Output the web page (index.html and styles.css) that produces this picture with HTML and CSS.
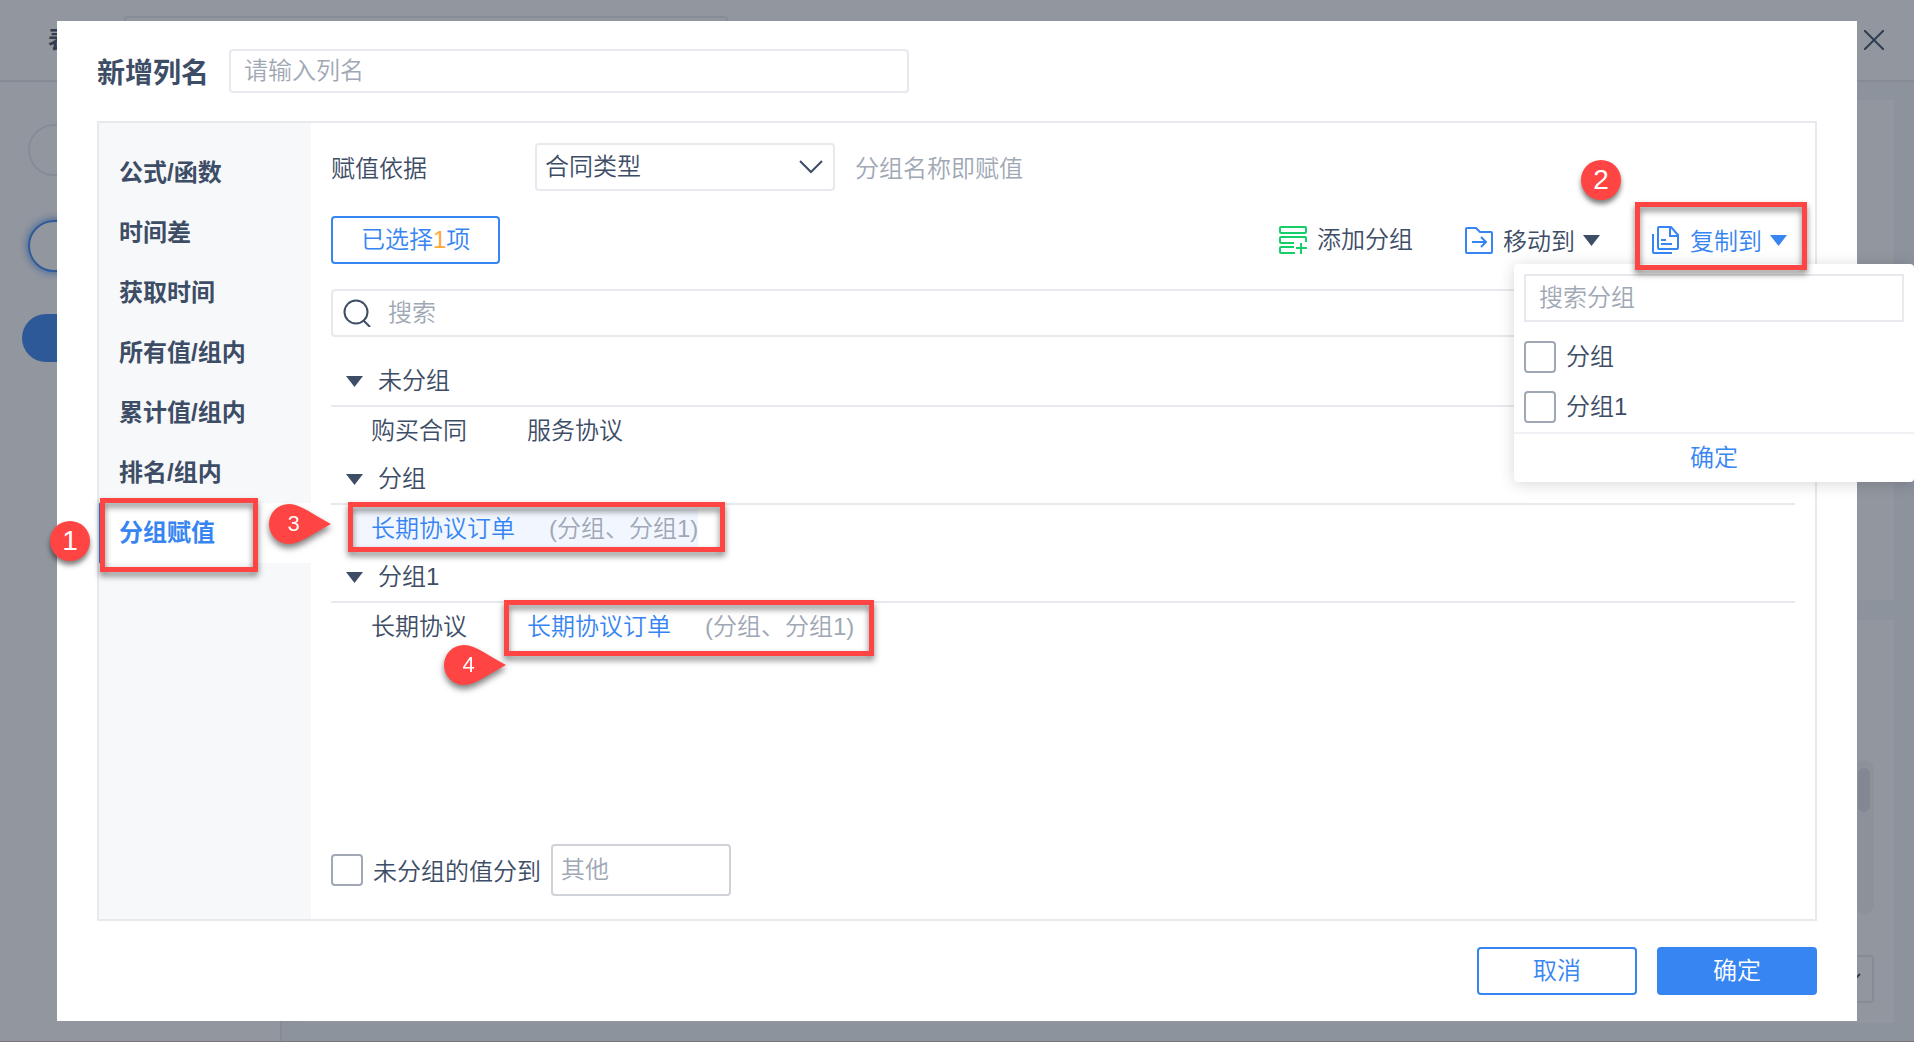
FILE: index.html
```
<!DOCTYPE html>
<html lang="zh-CN">
<head>
<meta charset="utf-8">
<meta name="viewport" content="width=device-width, initial-scale=1">
<title>新增列名</title>
<link rel="stylesheet" href="styles.css">
</head>
<body>
<div class="app" aria-hidden="true">
  <header class="app-header">
    <strong class="app-title">表</strong>
    <span class="app-name"></span>
    <svg class="app-close" viewBox="0 0 20 20" width="20" height="20"><path d="M0 0L20 20M20 0L0 20"/></svg>
  </header>
  <div class="app-main">
    <aside class="app-side">
      <span class="pill"></span>
      <span class="pill pill-focus"></span>
      <span class="pill pill-solid"></span>
    </aside>
    <div class="app-cards">
      <section class="app-card app-card-top"></section>
      <section class="app-card app-card-bottom">
        <div class="app-scroll"><span class="app-thumb"></span></div>
        <div class="app-select"><svg viewBox="0 0 22 12" width="22" height="12"><path d="M1 1L11 11L21 1"/></svg></div>
      </section>
    </div>
  </div>
  <div class="backdrop"></div>
</div>

<main class="modal" role="dialog" aria-labelledby="modal-title">
  <header class="modal-header">
    <h1 class="modal-title" id="modal-title"><label for="column-name">新增列名</label></h1>
    <input class="field name-field" id="column-name" type="text" placeholder="请输入列名">
  </header>

  <div class="panel">
    <nav class="tabs">
      <a class="tab" href="#formula">公式/函数</a>
      <a class="tab" href="#diff">时间差</a>
      <a class="tab" href="#time">获取时间</a>
      <a class="tab" href="#all">所有值/组内</a>
      <a class="tab" href="#total">累计值/组内</a>
      <a class="tab" href="#rank">排名/组内</a>
      <a class="tab tab-active" href="#group">分组赋值
        <span class="frame frame-tab"></span>
        <span class="badge badge-tab">1</span>
      </a>
    </nav>

    <section class="content">
      <div class="row basis-row">
        <label class="basis-label" for="basis">赋值依据</label>
        <div class="select-box">
          <select class="field select" id="basis"><option>合同类型</option></select>
          <svg class="chevron" viewBox="0 0 24 14" width="24" height="14"><path d="M1 1L12 12L23 1"/></svg>
        </div>
        <span class="muted basis-hint">分组名称即赋值</span>
      </div>

      <div class="row toolbar">
        <button class="btn btn-count" type="button">已选择<span class="count">1</span>项</button>
        <div class="actions">
          <button class="action" type="button">
            <svg class="icon icon-green" viewBox="0 0 28 28" width="28" height="28"><rect x="1" y="1" width="26" height="6" rx="1"/><path d="M27 16V12a1 1 0 0 0-1-1H2a1 1 0 0 0-1 1v4a1 1 0 0 0 1 1h13M15 21H2a1 1 0 0 0-1 1v4a1 1 0 0 0 1 1h14M17 22h11M22 17v11"/></svg>
            添加分组
          </button>
          <button class="action action-move" type="button">
            <svg class="icon" viewBox="0 0 28 28" width="28" height="28"><path d="M1 26V3a1 1 0 0 1 1-1h9l4 4h11a1 1 0 0 1 1 1v19a1 1 0 0 1-1 1H2a1 1 0 0 1-1-1zM7 16h14M16 11l5 5-5 5"/></svg>
            <span class="action-text">移动到</span>
            <svg class="caret" viewBox="0 0 17 11" width="17" height="11"><path d="M0 0H17L8.5 11z"/></svg>
          </button>
          <div class="copy">
            <button class="action action-copy" type="button" aria-expanded="true">
              <svg class="icon" viewBox="0 0 28 28" width="28" height="28"><path d="M1 8v18a1 1 0 0 0 1 1h18M6 22V2a1 1 0 0 1 1-1h12l7 8v13a1 1 0 0 1-1 1H7a1 1 0 0 1-1-1zM18 1v9h8M9 14h5M9 18h11"/></svg>
              <span class="action-text">复制到</span>
              <svg class="caret" viewBox="0 0 17 11" width="17" height="11"><path d="M0 0H17L8.5 11z"/></svg>
            </button>
            <div class="menu">
              <div class="menu-body">
                <input class="field menu-search" type="search" placeholder="搜索分组" aria-label="搜索分组">
                <label class="option"><input class="check" type="checkbox">分组</label>
                <label class="option"><input class="check" type="checkbox">分组1</label>
              </div>
              <button class="menu-ok" type="button">确定</button>
            </div>
            <span class="frame frame-copy"></span>
            <span class="badge badge-copy">2</span>
          </div>
        </div>
      </div>

      <div class="search">
        <svg class="search-icon" viewBox="0 0 28 28" width="28" height="28"><circle cx="13" cy="13" r="11.5"/><path d="M20 21l7 7"/></svg>
        <input class="field search-field" type="search" placeholder="搜索" aria-label="搜索">
      </div>

      <div class="groups">
        <h2 class="group-name"><svg class="caret" viewBox="0 0 17 11" width="17" height="11"><path d="M0 0H17L8.5 11z"/></svg>未分组</h2>
        <ul class="values">
          <li class="value">购买合同</li>
          <li class="value">服务协议</li>
        </ul>
        <h2 class="group-name"><svg class="caret" viewBox="0 0 17 11" width="17" height="11"><path d="M0 0H17L8.5 11z"/></svg>分组</h2>
        <ul class="values">
          <li class="value value-selected value-hover">长期协议订单<span class="muted">(分组、分组1)</span>
            <span class="frame frame-first"></span>
            <span class="pin pin-first"><svg viewBox="0 0 62 40" width="62" height="40"><path d="M20 0C32 0 46 12 62 20C46 28 32 40 20 40A20 20 0 0 1 20 0z"/></svg><b>3</b></span>
          </li>
        </ul>
        <h2 class="group-name"><svg class="caret" viewBox="0 0 17 11" width="17" height="11"><path d="M0 0H17L8.5 11z"/></svg>分组1</h2>
        <ul class="values">
          <li class="value">长期协议</li>
          <li class="value value-selected">长期协议订单<span class="muted">(分组、分组1)</span>
            <span class="frame frame-second"></span>
            <span class="pin pin-second"><svg viewBox="0 0 62 40" width="62" height="40"><path d="M20 0C32 0 46 12 62 20C46 28 32 40 20 40A20 20 0 0 1 20 0z"/></svg><b>4</b></span>
          </li>
        </ul>
      </div>

      <div class="rest">
        <input class="check" id="rest" type="checkbox">
        <label class="rest-label" for="rest">未分组的值分到</label>
        <input class="field rest-field" type="text" placeholder="其他" aria-label="其他">
      </div>
    </section>
  </div>

  <footer class="modal-footer">
    <button class="btn btn-wide" type="button">取消</button>
    <button class="btn btn-wide btn-primary" type="button">确定</button>
  </footer>
</main>
</body>
</html>
```
FILE: styles.css
```
* { box-sizing: border-box; }

:root {
  --ink: #3d4d66;
  --muted: #a0a8b5;
  --line: #e8e9ee;
  --blue: #3685f2;
  --red: #ff4444;
}

body {
  margin: 0;
  min-height: 100vh;
  padding: 21px 57px;
  display: flex;
  position: relative;
  overflow-x: hidden;
  color: var(--ink);
  font: 350 24px/32px "Liberation Sans", "Noto Sans CJK SC", sans-serif;
}

button, input, select { font: inherit; color: inherit; }
button { cursor: pointer; }

/* Application behind the dialog */
.app {
  position: absolute;
  inset: 0;
  display: flex;
  flex-direction: column;
  overflow: hidden;
  background: #f3f9fd;
  border-bottom: 1px solid #76767c;
}
.app-header {
  height: 82px;
  flex: none;
  display: flex;
  align-items: flex-start;
  padding: 16px 30px 0 48px;
  background: #fff;
  border-bottom: 2px solid #e8e9ee;
}
.app-title { width: 76px; line-height: 48px; font-weight: 700; }
.app-name { width: 604px; height: 48px; border: 2px solid #e8e9ee; border-radius: 4px; }
.app-close { margin: 14px 0 0 auto; fill: none; stroke: var(--ink); stroke-width: 2; }
.app-main { flex: 1; display: flex; }
.app-side {
  width: 282px;
  display: flex;
  flex-direction: column;
  gap: 44px;
  padding: 42px 22px;
  background: #fff;
  border-right: 2px solid #e8e9ee;
}
.pill { height: 52px; margin: 0 6px; border: 2px solid #e8e9ee; border-radius: 26px; }
.pill-focus { border-color: var(--blue); box-shadow: 0 0 10px var(--blue); }
.pill-solid { height: 48px; margin: -2px 0 0; border: 0; background: var(--blue); }
.app-cards { flex: 1; display: flex; flex-direction: column; gap: 20px; padding: 18px 20px; }
.app-card { background: #fff; }
.app-card-top { height: 500px; }
.app-card-bottom { flex: 1; padding: 140px 20px 20px; display: flex; flex-direction: column; align-items: flex-end; justify-content: space-between; }
.app-scroll { width: 20px; height: 154px; padding: 8px 4px; background: #f5f5f7; border-radius: 10px; }
.app-thumb { display: block; width: 12px; height: 44px; background: #dfe3e8; border-radius: 6px; }
.app-select { width: 200px; height: 48px; display: flex; align-items: center; justify-content: flex-end; padding-right: 11px; border: 2px solid #e8e9ee; border-radius: 4px; }
.app-select svg { fill: none; stroke: var(--ink); stroke-width: 2; }
.backdrop { position: absolute; inset: 0; background: rgba(37, 45, 61, .5); }

/* Dialog */
.modal {
  position: relative;
  flex: 1;
  min-width: 0;
  display: flex;
  flex-direction: column;
  padding: 28px 40px 26px;
  background: #fff;
}
.modal-header { display: flex; align-items: center; gap: 20px; margin-bottom: 28px; }
.modal-title { margin: 0; padding-top: 6px; font-size: 28px; line-height: 38px; font-weight: 700; }
.modal-footer { display: flex; justify-content: flex-end; gap: 20px; margin-top: 26px; }

.field {
  height: 48px;
  margin: 0;
  border: 2px solid var(--line);
  border-radius: 4px;
  background: #fff;
  outline: 0;
  appearance: none;
}
.field::placeholder { color: var(--muted); opacity: 1; }
.name-field { width: 680px; height: 44px; padding: 0 13px; }

.panel { flex: 1; display: flex; border: 2px solid var(--line); }
.tabs { width: 212px; flex: none; padding-top: 20px; background: #f7f8fa; }
.tab {
  position: relative;
  display: block;
  padding-left: 20px;
  line-height: 60px;
  font-weight: 700;
  color: inherit;
  text-decoration: none;
}
.tab-active { background: #fff; color: var(--blue); box-shadow: inset 2px 0 var(--blue); }

.content { flex: 1; min-width: 0; display: flex; flex-direction: column; padding: 20px 20px 23px; }
.row { display: flex; align-items: center; min-height: 48px; margin-bottom: 25px; }
.basis-row { gap: 20px; }
.basis-label { width: 184px; }
.basis-label, .basis-hint, .action-text, .rest-label { padding-top: 4px; }
.select-box { position: relative; width: 300px; }
.select { width: 100%; padding: 0 8px; }
.chevron { position: absolute; right: 12px; top: 17px; fill: none; stroke: var(--ink); stroke-width: 2; pointer-events: none; }
.muted { color: var(--muted); }

.btn {
  height: 48px;
  padding: 0 28px;
  border: 2px solid var(--blue);
  border-radius: 4px;
  background: #fff;
  color: var(--blue);
}
.count { color: #ffa938; }
.btn-wide { width: 160px; }
.btn-primary { background: var(--blue); color: #fff; }

.toolbar { justify-content: space-between; }
.actions { display: flex; gap: 52px; }
.action {
  display: flex;
  align-items: center;
  gap: 10px;
  height: 48px;
  padding: 0;
  border: 0;
  background: none;
}
.icon { fill: none; stroke: var(--blue); stroke-width: 2; }
.icon-green { stroke: #15d06a; }
.caret { fill: currentColor; }
.action .caret { margin-left: -2px; }
.action-copy { padding-right: 8px; color: var(--blue); }
.copy { position: relative; }

.menu {
  position: absolute;
  z-index: 2;
  top: 48px;
  right: -119px;
  width: 400px;
  background: #fff;
  border-radius: 4px;
  box-shadow: 0 2px 16px rgba(0, 0, 0, .16);
}
.menu-body { padding: 10px 10px 0; }
.menu-search { display: block; width: 100%; padding: 0 13px; margin-bottom: 10px; border-radius: 0; }
.option { display: flex; align-items: center; gap: 10px; height: 50px; }
.menu-ok { display: block; width: 100%; height: 50px; padding: 0; border: 0; border-top: 2px solid #f0f1f5; background: none; color: var(--blue); }

.check {
  width: 32px;
  height: 32px;
  flex: none;
  margin: 0;
  border: 2px solid var(--muted);
  border-radius: 4px;
  background: #fff;
  appearance: none;
}

.search { position: relative; }
.search-icon { position: absolute; left: 12px; top: 10px; fill: none; stroke: var(--ink); stroke-width: 2; }
.search-field { display: block; width: 100%; padding: 0 16px 0 55px; }

.groups { margin-top: 20px; }
.group-name {
  display: flex;
  align-items: center;
  gap: 15px;
  height: 50px;
  margin: 0;
  padding-left: 15px;
  border-bottom: 2px solid var(--line);
  font-size: 24px;
  font-weight: 350;
}
.values { display: flex; gap: 40px; height: 48px; margin: 0; padding: 4px 20px; list-style: none; }
.value { position: relative; padding-left: 20px; line-height: 40px; }
.value-selected { color: var(--blue); }
.value-hover { background: #f2f7ff; }
.value .muted { margin-left: 34px; }

.rest { display: flex; align-items: center; gap: 10px; margin-top: auto; }
.rest-field { width: 180px; height: 52px; padding: 0 8px; border-color: #cfd2d9; }

/* Step annotations */
.frame {
  position: absolute;
  z-index: 3;
  border: 5px solid var(--red);
  filter: drop-shadow(0 4px 3px rgba(0, 0, 0, .5));
  pointer-events: none;
}
.frame-tab { left: 1px; top: -5px; width: 158px; height: 74px; }
.frame-copy { right: -12px; top: -14px; width: 172px; height: 68px; }
.frame-first { left: -3px; top: -7px; right: -27px; height: 50px; }
.frame-second { left: -3px; top: -7px; right: -20px; height: 56px; }
.badge {
  position: absolute;
  z-index: 3;
  width: 40px;
  height: 40px;
  border-radius: 50%;
  background: var(--red);
  color: #fff;
  font-size: 28px;
  font-weight: 400;
  line-height: 40px;
  text-align: center;
  box-shadow: 0 4px 5px rgba(0, 0, 0, .5);
}
.badge-tab { left: -49px; top: 18px; }
.badge-copy { right: 174px; top: -56px; }
.pin { position: absolute; z-index: 3; width: 62px; height: 40px; filter: drop-shadow(0 4px 3px rgba(0, 0, 0, .5)); }
.pin svg { display: block; fill: var(--red); }
.pin b { position: absolute; left: 0; top: 0; width: 49px; color: #fff; font-size: 22px; font-weight: 400; line-height: 40px; text-align: center; }
.pin-first { left: -82px; top: -5px; }
.pin-second { left: -63px; top: 38px; }
```
